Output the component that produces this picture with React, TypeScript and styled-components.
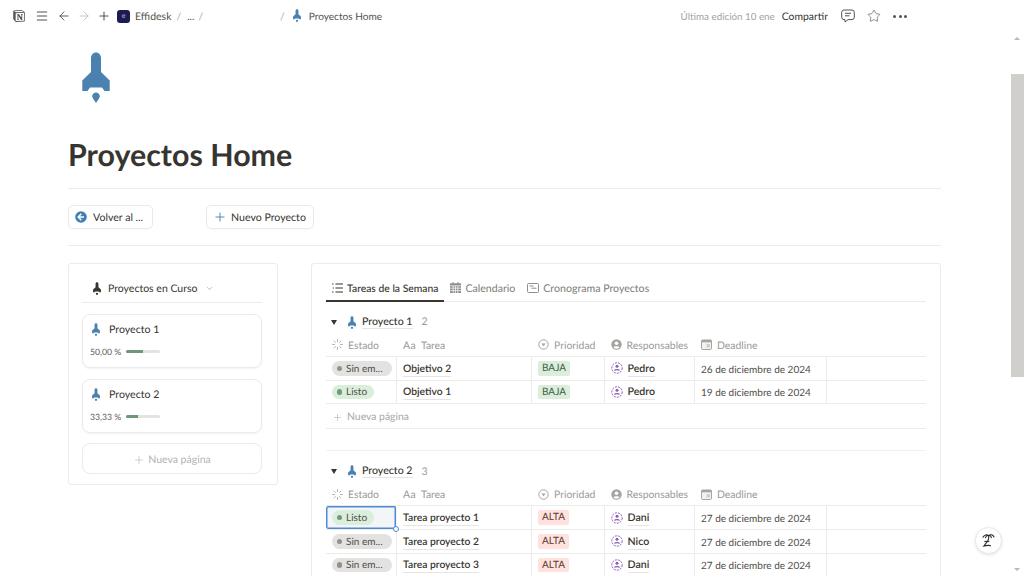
import React from "react";
import styled, { createGlobalStyle } from "styled-components";
import { SiNotion } from "react-icons/si";
import { Menu, ArrowLeft, ArrowRight, Plus, Star, ChevronDown } from "lucide-react";

const Global = createGlobalStyle`
  html, body { margin: 0; padding: 0; height: 100%; background: #fff; overflow: hidden; }
  body { font-family: "Lato", "Liberation Sans", sans-serif; color: #37352f; text-rendering: geometricPrecision; }
  * { box-sizing: border-box; }
`;

const Page = styled.div`
  width: 1024px; height: 576px; display: flex; flex-direction: column; overflow: hidden; position: relative; background: #fff;
`;
const TopBar = styled.header`
  height: 32px; flex: none; display: flex; align-items: center; padding: 0 117px 0 13px; font-size: 10.3px; color: #55534e;
`;
const TopIcon = styled.span<{ $ml?: number; $c?: string }>`
  display: inline-flex; margin-left: ${p => p.$ml ?? 0}px; color: ${p => p.$c ?? "#55534e"};
`;
const Workspace = styled.span`
  width: 13px; height: 13px; margin-left: 6px; border-radius: 3px; background: #1c1c52; color: #b9b4d8; font-size: 7px;
  display: inline-flex; align-items: center; justify-content: center;
`;
const Crumb = styled.span<{ $ml?: number; $c?: string; $fs?: number }>`
  margin-left: ${p => p.$ml ?? 0}px; color: ${p => p.$c ?? "#55534e"}; white-space: nowrap; padding-top: 2px;
  ${p => p.$fs ? `font-size: ${p.$fs}px;` : ""}
`;
const Spacer = styled.div`flex: 1;`;
const Dots = styled.span`
  margin-left: 12px; display: inline-flex; gap: 2.5px;
  i { width: 3px; height: 3px; border-radius: 50%; background: #55534e; display: block; }
`;

const Body = styled.div`flex: 1; display: flex; min-height: 0;`;
const Scroll = styled.main`flex: 1; min-width: 0; overflow: hidden; padding: 0 69px 0 68px;`;
const Rail = styled.div`
  width: 14px; flex: none; position: relative;
`;
const Arrow = styled.span<{ $down?: boolean }>`
  position: absolute; left: 4px; ${p => p.$down ? "bottom: 5px;" : "top: 5px;"}
  border-left: 3px solid transparent; border-right: 3px solid transparent;
  ${p => p.$down ? "border-top: 3px solid #b9b8b4;" : "border-bottom: 3px solid #b9b8b4;"}
`;
const Thumb = styled.div`
  position: absolute; top: 42px; left: 1px; width: 13px; height: 303px; background: #d0cfcb;
`;

const HeroIcon = styled.div`padding: 20px 0 0 14px; height: 71px; display: flex;`;
const Title = styled.h1`
  margin: 32px 0 0; font-size: 30.4px; line-height: 40px; font-weight: 700; color: #37352f; font-family: "Lato", sans-serif;
`;
const Rule = styled.hr<{ $mt: number }>`
  border: 0; height: 1px; background: #ecebe9; margin: ${p => p.$mt}px 0 0;
`;
const ButtonRow = styled.div`display: flex; gap: 53px; margin-top: 16px;`;
const ActionButton = styled.div<{ $w: number; $gap: number }>`
  width: ${p => p.$w}px; height: 24px; border: 1px solid #e9e9e7; border-radius: 5px; display: flex; align-items: center;
  gap: ${p => p.$gap}px; padding-left: 6px; font-size: 10.6px; color: #37352f; white-space: nowrap; box-shadow: 0 1px 1px rgba(15,15,15,.02);
  span { padding-top: 2px; }
`;
const Columns = styled.div`display: flex; gap: 33px; margin-top: 17px; align-items: flex-start;`;
const SidePanel = styled.aside`
  width: 210px; height: 222px; flex: none; border: 1px solid #ecebe9; border-radius: 3px; padding: 0 15px 0 13px;
  display: flex; flex-direction: column;
`;
const SideHeader = styled.div`
  height: 39px; border-bottom: 1px solid #ecebe9; display: flex; align-items: center; padding: 11px 0 0 11px; font-size: 10.5px; gap: 7px; flex: none;
`;
const Card = styled.div`
  height: 54px; border: 1px solid #ecebe9; border-radius: 8px; margin-top: 11px; padding: 7px 7px 0; flex: none;
  box-shadow: 0 1px 2px rgba(15,15,15,.05);
`;
const CardTitle = styled.div`
  display: flex; align-items: center; gap: 9px; font-size: 10.6px; height: 15px; padding-left: 2px;
`;
const ProgressRow = styled.div`
  display: flex; align-items: center; gap: 5px; font-size: 8.7px; color: #5f5e5a; margin-top: 9px;
`;
const Track = styled.div`width: 34px; height: 3px; border-radius: 2px; background: #e3e3e1; overflow: hidden;`;
const Fill = styled.div`height: 100%; background: #6f9679;`;
const NewCard = styled.div`
  height: 31px; border: 1px solid #ecebe9; border-radius: 8px; margin-top: 10px; display: flex; align-items: center; justify-content: center;
  gap: 3px; padding-top: 2px; font-size: 10.5px; color: #b4b3af; flex: none;
`;

const MainPanel = styled.section`
  flex: 1; height: 400px; border: 1px solid #ecebe9; border-radius: 3px; padding: 0 14px 0 14px;
`;
const Tabs = styled.nav`
  height: 38px; display: flex; align-items: flex-end; border-bottom: 1px solid #ecebe9;
`;
const Tab = styled.div<{ $active?: boolean }>`
  height: 26px; display: flex; align-items: center; gap: 4px; padding: 1px 6px 0 6px; white-space: nowrap; margin-bottom: -1px;
  font-size: ${p => p.$active ? 10.35 : 10.6}px;
  color: ${p => p.$active ? "#37352f" : "#7d7c78"}; font-weight: ${p => p.$active ? 500 : 400};
  border-bottom: 2px solid ${p => p.$active ? "#37352f" : "transparent"};
`;
const GroupHead = styled.div`
  height: 28.6px; display: flex; align-items: center; font-size: 10.6px; padding: 6px 0 0 5px; margin-top: 3px;
`;
const Tri = styled.span`
  width: 0; height: 0; border-left: 3.5px solid transparent; border-right: 3.5px solid transparent; border-top: 5px solid #37352f; margin-right: 11px;
`;
const GroupName = styled.span`
  margin-left: 6px; border-bottom: 1px solid #e6e5e3; line-height: 12px; font-weight: 500;
`;
const Count = styled.span`margin-left: 9px; color: #9b9a97;`;
const Row = styled.div<{ $head?: boolean }>`
  display: grid; grid-template-columns: 71px 135px 72.5px 90.5px 131.5px 1fr;
  height: ${p => p.$head ? "23.5px" : "23.6px"};
  border-bottom: 1px solid #ecebe9;
  font-size: 10.3px;
`;
const HeadCell = styled.div`
  display: flex; align-items: center; gap: 5px; padding: 2px 0 0 6px; color: #9b9a97; white-space: nowrap; font-size: 10.4px;
`;
const Aa = styled.span`font-size: 10.5px; letter-spacing: .3px;`;
const Cell = styled.div<{ $last?: boolean; $selected?: boolean }>`
  display: flex; align-items: center; padding-left: 6px; position: relative; white-space: nowrap;
  border-right: ${p => p.$last ? 0 : "1px solid #ecebe9"};
  ${p => p.$selected ? "background: #f3f6f9; box-shadow: inset 0 0 0 1.5px #4f8ad6; border-radius: 2px; border-right-color: transparent;" : ""}
`;
const Handle = styled.span`
  position: absolute; right: -3px; bottom: -3px; width: 6px; height: 6px; border-radius: 50%; background: #fff; border: 1px solid #4f8ad6; z-index: 1;
`;
const Status = styled.span<{ $bg: string; $dot: string; $w?: number }>`
  height: 14.5px; border-radius: 7.5px; background: ${p => p.$bg}; display: inline-flex; align-items: center; gap: 4px; padding: 1px 7px 0 4.5px;
  ${p => p.$w ? `width: ${p.$w}px;` : ""}
  font-size: 10px; color: #4f4e49; white-space: nowrap;
  &::before { content: ""; width: 5.5px; height: 5.5px; border-radius: 50%; background: ${p => p.$dot}; margin-top: -1px; }
`;
const TaskName = styled.span`font-weight: 600; border-bottom: 1px solid #e6e5e3; line-height: 13px; padding-top: 3px; color: #37352f; font-size: 10.3px;`;
const Tag = styled.span<{ $bg: string; $fg: string }>`
  height: 14.5px; line-height: 15.5px; padding: 0 4px; border-radius: 2px; background: ${p => p.$bg}; color: ${p => p.$fg}; font-size: 10px;
`;
const Person = styled.span`
  display: inline-flex; align-items: center; gap: 5px;
  b { font-weight: 600; border-bottom: 1px solid #e6e5e3; line-height: 13px; padding-top: 3px; color: #37352f; font-size: 10.6px; }
`;
const DateText = styled.span`color: #4f4e49; font-size: 10px; padding-top: 3px;`;
const NewRow = styled.div`
  height: 24.4px; border-bottom: 1px solid #ecebe9; display: flex; align-items: center; gap: 4px; padding: 3px 0 0 6px; font-size: 10.4px; color: #a9a8a4;
`;
const GroupGap = styled.div`height: 22.6px; border-bottom: 1px solid #f1f1ef;`;
const Fab = styled.div`
  position: absolute; left: 975px; top: 527px; width: 27px; height: 27px; border-radius: 50%; background: #fff; border: 1px solid #e9e9e7;
  box-shadow: 0 1px 3px rgba(15,15,15,.12); display: flex; align-items: center; justify-content: center;
`;

const Rocket = ({ size = 8, color = "#4a81ae", tall = 13.5 }: { size?: number; color?: string; tall?: number }) => (
  <svg width={size} height={tall} viewBox="0 0 28 51" preserveAspectRatio="none" style={{ flex: "none" }}>
    <path fill={color} d="M14 .5C11 .5 9 3 9 6v14L.3 28.5V39h5.2L8 35.5h12L22.5 39h5.2V28.5L19 20V6c0-3-2-5.5-5-5.5Z" />
    <path fill={color} d="M14 51l-3-4.5a3.7 3.7 0 1 1 6 0Z" />
  </svg>
);

const PersonIcon = () => (
  <svg width="12" height="12" viewBox="0 0 12 12" style={{ flex: "none" }}>
    <circle cx="6" cy="6" r="5.2" fill="none" stroke="#8a5fb3" strokeWidth="1" strokeDasharray="2 1.1" />
    <circle cx="6" cy="4.2" r="1.5" fill="#8a5fb3" />
    <path d="M3.4 8.6c.6-1.3 4.6-1.3 5.2 0" stroke="#8a5fb3" strokeWidth="1.1" fill="none" />
  </svg>
);
const SpinIcon = () => (
  <svg width="11" height="11" viewBox="0 0 11 11" stroke="#b4b3af" strokeWidth="1" strokeLinecap="round" style={{ flex: "none", marginTop: -2 }}>
    <path d="M5.5.6v2M5.5 8.4v2M.6 5.5h2M8.4 5.5h2M2 2l1.4 1.4M7.6 7.6 9 9M2 9l1.4-1.4M7.6 3.4 9 2" />
  </svg>
);
const SelectIcon = () => (
  <svg width="11" height="11" viewBox="0 0 11 11" style={{ flex: "none", marginTop: -2 }}>
    <circle cx="5.5" cy="5.5" r="4.7" fill="none" stroke="#a5a4a0" strokeWidth="1" />
    <path d="M3.3 4.4h4.4L5.5 7.2Z" fill="#a5a4a0" />
  </svg>
);
const UserIcon = () => (
  <svg width="11" height="11" viewBox="0 0 11 11" style={{ flex: "none", marginTop: -2 }}>
    <circle cx="5.5" cy="5.5" r="5.2" fill="#a5a4a0" />
    <circle cx="5.5" cy="4.2" r="1.8" fill="#fff" />
    <path d="M2.4 8.4c.8-1.7 5.4-1.7 6.2 0a4.2 4.2 0 0 1-6.2 0Z" fill="#fff" />
  </svg>
);
const CalIcon = () => (
  <svg width="11" height="11" viewBox="0 0 11 11" style={{ flex: "none", marginTop: -2 }}>
    <rect x=".5" y="1" width="10" height="9.5" rx="1.2" fill="#f1f1ef" stroke="#a5a4a0" />
    <rect x=".5" y="1" width="10" height="2.3" fill="#a5a4a0" />
    <rect x="5.5" y="5" width="3.5" height="3.5" fill="#d0cfcb" />
  </svg>
);
const ListIcon = () => (
  <svg width="11" height="10" viewBox="0 0 11 10" fill="none" stroke="#37352f" strokeWidth="1" style={{ flex: "none", marginTop: -2 }}>
    <path d="M3.5 1h7.5M3.5 5h7.5M3.5 9h7.5" />
    <path d="M0 1h1.6M.8 5h1.2M0 9h1.6" strokeWidth=".9" />
  </svg>
);
const GridCal = () => (
  <svg width="11" height="11" viewBox="0 0 11 11" style={{ flex: "none", marginTop: -2 }}>
    <path fill="#8f8e8a" d="M2.5 0h1v1.2h4V0h1v1.2H11V11H0V1.2h2.5Z" />
    <path stroke="#fff" strokeWidth=".7" d="M0 3.8h11M0 6.2h11M0 8.6h11M3.2 3.8V11M5.5 3.8V11M7.8 3.8V11" />
  </svg>
);
const TimelineIcon = () => (
  <svg width="12" height="10" viewBox="0 0 12 10" fill="none" stroke="#8f8e8a" style={{ flex: "none", marginTop: -2 }}>
    <rect x=".5" y=".5" width="11" height="9" rx="1" />
    <path d="M2.5 3h4M4.5 5.2h5" />
  </svg>
);
const CommentIcon = () => (
  <svg width="14" height="14" viewBox="0 0 14 14" fill="none" stroke="#55534e" strokeWidth="1">
    <path d="M3 1h8a2.3 2.3 0 0 1 2.3 2.3v5A2.3 2.3 0 0 1 11 10.6H7L4 13v-2.4H3A2.3 2.3 0 0 1 .7 8.3v-5A2.3 2.3 0 0 1 3 1Z" />
    <path d="M4 4.3h6M4 6.8h4.5" />
  </svg>
);
const BackIcon = () => (
  <svg width="12" height="12" viewBox="0 0 12 12" style={{ flex: "none" }}>
    <circle cx="6" cy="6" r="5.8" fill="#3f7fb2" />
    <path d="M6.3 2.8 3.2 6l3.1 3.2M3.4 6h5.6" stroke="#fff" strokeWidth="1.5" fill="none" />
  </svg>
);
const PalmIcon = () => (
  <svg width="15" height="15" viewBox="0 0 15 15" fill="none" stroke="#2c2b27" strokeWidth="1.1" strokeLinecap="round">
    <path d="M2 4.2C3.2 1.8 6 1.2 7.6 2.6 9.4 1 12 1.6 13 4M7.6 2.6C6.6 2.2 5 3 4.4 4.8M7.6 2.6c1.2-.2 2.4.6 2.8 2" />
    <path d="M7.6 2.8c.6 2.8-.4 5-2.6 7.4L3 13c2.4-.8 4.4-.8 6.4-.4" />
    <path d="M3.8 8.6c1.4-.5 2.6-.5 4 0" />
  </svg>
);

type Task = { status: "none" | "done"; name: string; tag: "BAJA" | "ALTA"; who: string; date: string; selected?: boolean };
const group1: Task[] = [
  { status: "none", name: "Objetivo 2", tag: "BAJA", who: "Pedro", date: "26 de diciembre de 2024" },
  { status: "done", name: "Objetivo 1", tag: "BAJA", who: "Pedro", date: "19 de diciembre de 2024" },
];
const group2: Task[] = [
  { status: "done", name: "Tarea proyecto 1", tag: "ALTA", who: "Dani", date: "27 de diciembre de 2024", selected: true },
  { status: "none", name: "Tarea proyecto 2", tag: "ALTA", who: "Nico", date: "27 de diciembre de 2024" },
  { status: "none", name: "Tarea proyecto 3", tag: "ALTA", who: "Dani", date: "27 de diciembre de 2024" },
];

const HeaderRow = () => (
  <Row $head>
    <HeadCell><SpinIcon />Estado</HeadCell>
    <HeadCell><Aa>Aa</Aa>Tarea</HeadCell>
    <HeadCell><SelectIcon />Prioridad</HeadCell>
    <HeadCell><UserIcon />Responsables</HeadCell>
    <HeadCell><CalIcon />Deadline</HeadCell>
    <HeadCell />
  </Row>
);

const TaskRow = ({ t }: { t: Task }) => (
  <Row>
    <Cell $selected={t.selected}>
      {t.status === "none"
        ? <Status $bg="#e3e2e0" $dot="#91918e" $w={60}>Sin em...</Status>
        : <Status $bg="#dbeddb" $dot="#6c9b7d">Listo</Status>}
      {t.selected && <Handle />}
    </Cell>
    <Cell><TaskName>{t.name}</TaskName></Cell>
    <Cell>
      {t.tag === "BAJA" ? <Tag $bg="#dbeddb" $fg="#3f5f49">BAJA</Tag> : <Tag $bg="#ffe2dd" $fg="#5d3a33">ALTA</Tag>}
    </Cell>
    <Cell><Person><PersonIcon /><b>{t.who}</b></Person></Cell>
    <Cell><DateText>{t.date}</DateText></Cell>
    <Cell $last />
  </Row>
);

const ProjectCard = ({ name, pct, value }: { name: string; pct: string; value: number }) => (
  <Card>
    <CardTitle><Rocket />{name}</CardTitle>
    <ProgressRow>{pct}<Track><Fill style={{ width: `${value}%` }} /></Track></ProgressRow>
  </Card>
);

export default function App() {
  return (
    <Page>
      <Global />
      <TopBar>
        <TopIcon><SiNotion size={12} /></TopIcon>
        <TopIcon $ml={10}><Menu size={14} strokeWidth={1.8} /></TopIcon>
        <TopIcon $ml={8}><ArrowLeft size={14} strokeWidth={1.6} /></TopIcon>
        <TopIcon $ml={6} $c="#c0bfbb"><ArrowRight size={14} strokeWidth={1.6} /></TopIcon>
        <TopIcon $ml={6}><Plus size={14} strokeWidth={1.8} /></TopIcon>
        <Workspace>e</Workspace>
        <Crumb $ml={5} $fs={10.5}>Effidesk</Crumb>
        <Crumb $ml={5} $c="#a9a8a4">/</Crumb>
        <Crumb $ml={6}>...</Crumb>
        <Crumb $ml={4} $c="#a9a8a4">/</Crumb>
        <Crumb $ml={77} $c="#a9a8a4">/</Crumb>
        <TopIcon $ml={8}><Rocket /></TopIcon>
        <Crumb $ml={8} $fs={10.1}>Proyectos Home</Crumb>
        <Spacer />
        <Crumb $c="#a3a29e" $fs={9.8}>Última edición 10 ene</Crumb>
        <Crumb $ml={7} $c="#37352f" $fs={10.4}>Compartir</Crumb>
        <TopIcon $ml={13}><CommentIcon /></TopIcon>
        <TopIcon $ml={12}><Star size={14} strokeWidth={1.1} /></TopIcon>
        <Dots><i /><i /><i /></Dots>
      </TopBar>
      <Body>
        <Scroll>
          <HeroIcon><Rocket size={28} tall={51} /></HeroIcon>
          <Title>Proyectos Home</Title>
          <Rule $mt={13} />
          <ButtonRow>
            <ActionButton $w={85} $gap={6}><BackIcon /><span>Volver al ...</span></ActionButton>
            <ActionButton $w={108} $gap={4}><Plus size={14} color="#3f7fb2" strokeWidth={1.5} /><span>Nuevo Proyecto</span></ActionButton>
          </ButtonRow>
          <Rule $mt={16} />
          <Columns>
            <SidePanel>
              <SideHeader>
                <Rocket color="#37352f" />
                Proyectos en Curso
                <ChevronDown size={9} color="#a9a8a4" />
              </SideHeader>
              <ProjectCard name="Proyecto 1" pct="50,00 %" value={50} />
              <ProjectCard name="Proyecto 2" pct="33,33 %" value={33} />
              <NewCard><Plus size={12} strokeWidth={1.2} />Nueva página</NewCard>
            </SidePanel>
            <MainPanel>
              <Tabs>
                <Tab $active><ListIcon />Tareas de la Semana</Tab>
                <Tab><GridCal />Calendario</Tab>
                <Tab><TimelineIcon />Cronograma Proyectos</Tab>
              </Tabs>
              <GroupHead>
                <Tri /><Rocket /><GroupName>Proyecto 1</GroupName><Count>2</Count>
              </GroupHead>
              <HeaderRow />
              {group1.map(t => <TaskRow key={t.name} t={t} />)}
              <NewRow><Plus size={11} strokeWidth={1.2} />Nueva página</NewRow>
              <GroupGap />
              <GroupHead>
                <Tri /><Rocket /><GroupName>Proyecto 2</GroupName><Count>3</Count>
              </GroupHead>
              <HeaderRow />
              {group2.map(t => <TaskRow key={t.name} t={t} />)}
            </MainPanel>
          </Columns>
        </Scroll>
        <Rail>
          <Arrow />
          <Thumb />
          <Arrow $down />
        </Rail>
      </Body>
      <Fab><PalmIcon /></Fab>
    </Page>
  );
}
